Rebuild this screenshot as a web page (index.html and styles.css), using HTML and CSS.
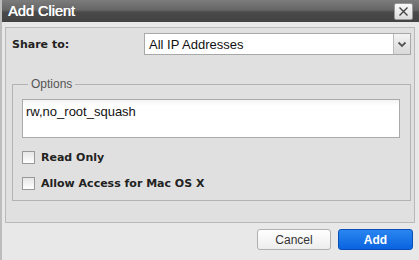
FILE: index.html
```html
<!DOCTYPE html>
<html>
<head>
    <title>Add Client</title>
    <link rel="stylesheet" href="styles.css">
</head>
<body>
    <div class="dialog">
        <div class="titlebar">
            <span class="title">Add Client</span>
            <span class="close">
                <svg width="11" height="11" viewBox="0 0 11 11"><path d="M1.5 1.5 L9.5 9.5 M9.5 1.5 L1.5 9.5" stroke="#444" stroke-width="1.4"/></svg>
            </span>
        </div>

        <div class="panel">
            <div class="share-row">
                <label class="share-label">Share to:</label>
                <div class="select">
                    <span class="select-text">All IP Addresses</span>
                    <span class="select-arrow">
                        <svg width="10" height="7" viewBox="0 0 10 7"><path d="M1.5 1.5 L5 5 L8.5 1.5" stroke="#555" stroke-width="1.8" fill="none"/></svg>
                    </span>
                </div>
            </div>

            <fieldset class="options">
                <legend>Options</legend>
                <div class="textarea">rw,no_root_squash</div>
                <div class="check-row"><span class="checkbox"></span><span class="check-label">Read Only</span></div>
                <div class="check-row"><span class="checkbox"></span><span class="check-label">Allow Access for Mac OS X</span></div>
            </fieldset>
        </div>

        <div class="buttons">
            <button class="btn cancel">Cancel</button>
            <button class="btn add">Add</button>
        </div>
    </div>
</body>
</html>
```

FILE: styles.css
```css
body, html {
    margin: 0;
    padding: 0;
}

body {
    background: #e8e8e8;
    font-family: 'DejaVu Sans', Verdana, sans-serif;
}

.dialog {
    width: 419px;
    height: 260px;
    display: flex;
    flex-direction: column;
    border-left: 2px solid #bdbdbd;
    box-sizing: border-box;
}

.titlebar {
    height: 22px;
    background: linear-gradient(#7c7c7c, #666 45%, #4a4a4a 55%, #424242);
    display: flex;
    align-items: center;
    justify-content: space-between;
    padding: 0 6px 0 6px;
}

.title {
    color: #fff;
    font-family: 'Liberation Sans', Arial, sans-serif;
    font-size: 14.5px;
    text-shadow: 0.4px 0 0 #fff;
}

.close {
    width: 17px;
    height: 15px;
    background: linear-gradient(#fafafa, #dcdcdc);
    border: 1px solid #999;
    border-radius: 2px;
    display: flex;
    align-items: center;
    justify-content: center;
}

.panel {
    margin: 5px 4px 0 3px;
    height: 196px;
    border: 1px solid #b9b9b9;
    background: #e0e0e0;
    padding: 5px 3px 0 6px;
    box-sizing: border-box;
}

.share-row {
    display: flex;
    align-items: center;
    height: 22px;
}

.share-label {
    width: 132px;
    font-size: 11px;
    font-weight: bold;
    color: #222;
}

.select {
    flex: 1;
    height: 22px;
    box-sizing: border-box;
    border: 1px solid #a8a8a8;
    background: #fff;
    display: flex;
    align-items: center;
}

.select-text {
    flex: 1;
    padding-left: 4px;
    font-family: 'Liberation Sans', Arial, sans-serif;
    font-size: 13px;
    color: #111;
}

.select-arrow {
    width: 16px;
    height: 20px;
    border-left: 1px solid #bbb;
    background: linear-gradient(#f4f4f4, #d8d8d8);
    display: flex;
    align-items: center;
    justify-content: center;
}

.options {
    margin: 22px 0 0 0;
    padding: 8px 10px 0 9px;
    height: 124px;
    box-sizing: border-box;
    border: 1px solid #b3b3b3;
    border-radius: 0;
}

.options legend {
    margin-left: 6px;
    padding: 0 3px;
    font-family: 'Liberation Sans', Arial, sans-serif;
    font-size: 12px;
    color: #555;
}

.textarea {
    height: 39px;
    box-sizing: border-box;
    border: 1px solid #aaa;
    background: linear-gradient(#f4f4f4, #fff 6px);
    padding: 4px 3px;
    font-family: 'Liberation Sans', Arial, sans-serif;
    font-size: 13px;
    color: #111;
}

.check-row {
    display: flex;
    align-items: center;
    margin-top: 13px;
    height: 13px;
}

.checkbox {
    width: 11px;
    height: 11px;
    border: 1px solid #999;
    background: linear-gradient(#e6e6e6, #fff);
    margin-right: 6px;
}

.check-label {
    font-size: 11px;
    font-weight: bold;
    color: #222;
}

.buttons {
    display: flex;
    justify-content: flex-end;
    gap: 7px;
    padding: 6px 6px 0 0;
}

.btn {
    height: 21px;
    border-radius: 3px;
    font-family: 'Liberation Sans', Arial, sans-serif;
    font-size: 12px;
    padding: 0;
}

.cancel {
    width: 74px;
    border: 1px solid #b0b0b0;
    background: linear-gradient(#fff, #ededed);
    color: #333;
}

.add {
    width: 75px;
    border: 1px solid #0a4fb8;
    background: linear-gradient(#2a86f0, #0a63e0);
    color: #fff;
    font-weight: bold;
}
```
